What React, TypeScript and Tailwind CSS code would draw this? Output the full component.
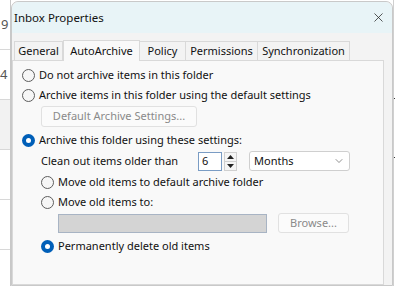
import React from 'react';
import { X, ChevronDown } from 'lucide-react';

const Radio: React.FC<{ checked?: boolean; label: string }> = ({ checked, label }) => (
  <label className="flex items-center gap-[4px] h-[20px]">
    {checked ? (
      <span className="w-[13px] h-[13px] rounded-full bg-[#005fb8] flex items-center justify-center shrink-0">
        <span className="w-[5px] h-[5px] rounded-full bg-white" />
      </span>
    ) : (
      <span className="w-[13px] h-[13px] rounded-full border border-[#5d5d5d] bg-[#f6f6f6] shrink-0" />
    )}
    <span>{label}</span>
  </label>
);

const tabs = [
  { name: 'General', w: 'w-[49px]' },
  { name: 'AutoArchive', w: 'w-[77px]' },
  { name: 'Policy', w: 'w-[46px]' },
  { name: 'Permissions', w: 'w-[72px]' },
  { name: 'Synchronization', w: 'w-[92px]' },
];

export default function App() {
  return (
    <div
      className="w-[395px] h-[286px] overflow-hidden flex bg-white text-[11px] text-[#111]"
      style={{ fontFamily: '"Noto Sans", "Open Sans", sans-serif' }}
    >
      {/* window behind, left edge */}
      <div className="w-[11px] shrink-0 flex flex-col border-r border-[#c8c8c8] text-[#555] text-[13px] leading-none overflow-hidden">
        <div className="h-[50px] border-b border-[#d8d8d8] pt-[18px] pl-[1px]">9</div>
        <div className="h-[50px] border-b border-[#d8d8d8] pt-[18px]">4</div>
        <div className="h-[50px] border-b border-[#d8d8d8] bg-[#f2f2f2]" />
        <div className="h-[50px] border-b border-[#d8d8d8]" />
        <div className="h-[50px] border-b border-[#d8d8d8]" />
        <div className="flex-1" />
      </div>

      {/* dialog */}
      <div className="w-[382px] shrink-0 mt-[1px] rounded-t-[7px] border border-[#c9c9c9] bg-[#f3f3f3] flex flex-col">
        <div className="h-[31px] bg-[#e8f4f7] rounded-t-[7px] flex items-center justify-between pl-[2px] pr-[6px]">
          <span className="text-[11.5px]">Inbox Properties</span>
          <X className="w-[15px] h-[15px] text-[#222]" strokeWidth={1.2} />
        </div>

        <div className="flex-1 flex flex-col pr-[8px] pt-[6px]">
          <div className="flex items-end h-[21px] pl-[2px]">
            {tabs.map((t, i) => (
              <div
                key={t.name}
                className={
                  t.name === 'AutoArchive'
                    ? `${t.w} h-[21px] bg-[#f9f9f9] border border-b-0 border-[#d9d9d9] flex items-center justify-center -mb-px z-10`
                    : `${t.w} h-[19px] border border-b-0 border-[#d9d9d9] flex items-center justify-center ${i === 0 ? '' : 'border-l-0'}`
                }
              >
                {t.name}
              </div>
            ))}
          </div>

          <div className="flex-1 bg-[#f9f9f9] border border-[#d9d9d9] pl-[9px] pt-[4px] flex flex-col">
            <Radio label="Do not archive items in this folder" />
            <Radio label="Archive items in this folder using the default settings" />
            <div className="pl-[19px] pt-[1px]">
              <div className="w-[156px] h-[21px] rounded-[3px] border border-[#e1e1e1] bg-[#fbfbfb] text-[#8a8a8a] flex items-center justify-center">
                Default Archive Settings...
              </div>
            </div>
            <div className="mt-[3px]">
              <Radio checked label="Archive this folder using these settings:" />
            </div>

            <div className="pl-[19px] flex flex-col">
              <div className="flex items-center h-[22px]">
                <span className="w-[157px]">Clean out items older than</span>
                <div className="w-[24px] h-[19px] border border-[#7a9cc4] bg-white flex items-center pl-[3px]">6</div>
                <div className="ml-[2px] w-[13px] h-[19px] flex flex-col text-[#333]">
                  <div className="flex-1 border border-[#d0d0d0] bg-[#f5f5f5] flex items-center justify-center">
                    <svg width="7" height="4" viewBox="0 0 7 4"><path d="M3.5 0 L7 4 L0 4 Z" fill="#222" /></svg>
                  </div>
                  <div className="flex-1 border border-t-0 border-[#d0d0d0] bg-[#f5f5f5] flex items-center justify-center">
                    <svg width="7" height="4" viewBox="0 0 7 4"><path d="M0 0 L7 0 L3.5 4 Z" fill="#222" /></svg>
                  </div>
                </div>
                <div className="ml-[12px] w-[101px] h-[20px] border border-[#cfcfcf] rounded-[3px] bg-white flex items-center justify-between pl-[4px] pr-[4px]">
                  <span>Months</span>
                  <ChevronDown className="w-[12px] h-[12px] text-[#555]" strokeWidth={1.3} />
                </div>
              </div>
              <Radio label="Move old items to default archive folder" />
              <Radio label="Move old items to:" />
              <div className="flex items-center pl-[17px] h-[22px]">
                <div className="w-[209px] h-[19px] border border-[#a8b4c4] bg-[#d4d4d4]" />
                <div className="ml-[11px] w-[71px] h-[20px] rounded-[3px] border border-[#e1e1e1] bg-[#fbfbfb] text-[#8a8a8a] flex items-center justify-center">
                  Browse...
                </div>
              </div>
              <div className="mt-[2px]">
                <Radio checked label="Permanently delete old items" />
              </div>
            </div>
          </div>
        </div>
      </div>

      {/* window behind, right edge */}
      <div className="flex-1 flex flex-col border-l border-[#d0d0d0]">
        <div className="h-[98px]" />
        <div className="h-[1px] bg-[#333]" />
        <div className="h-[58px]" />
        <div className="h-[1px] bg-[#333]" />
      </div>
    </div>
  );
}
